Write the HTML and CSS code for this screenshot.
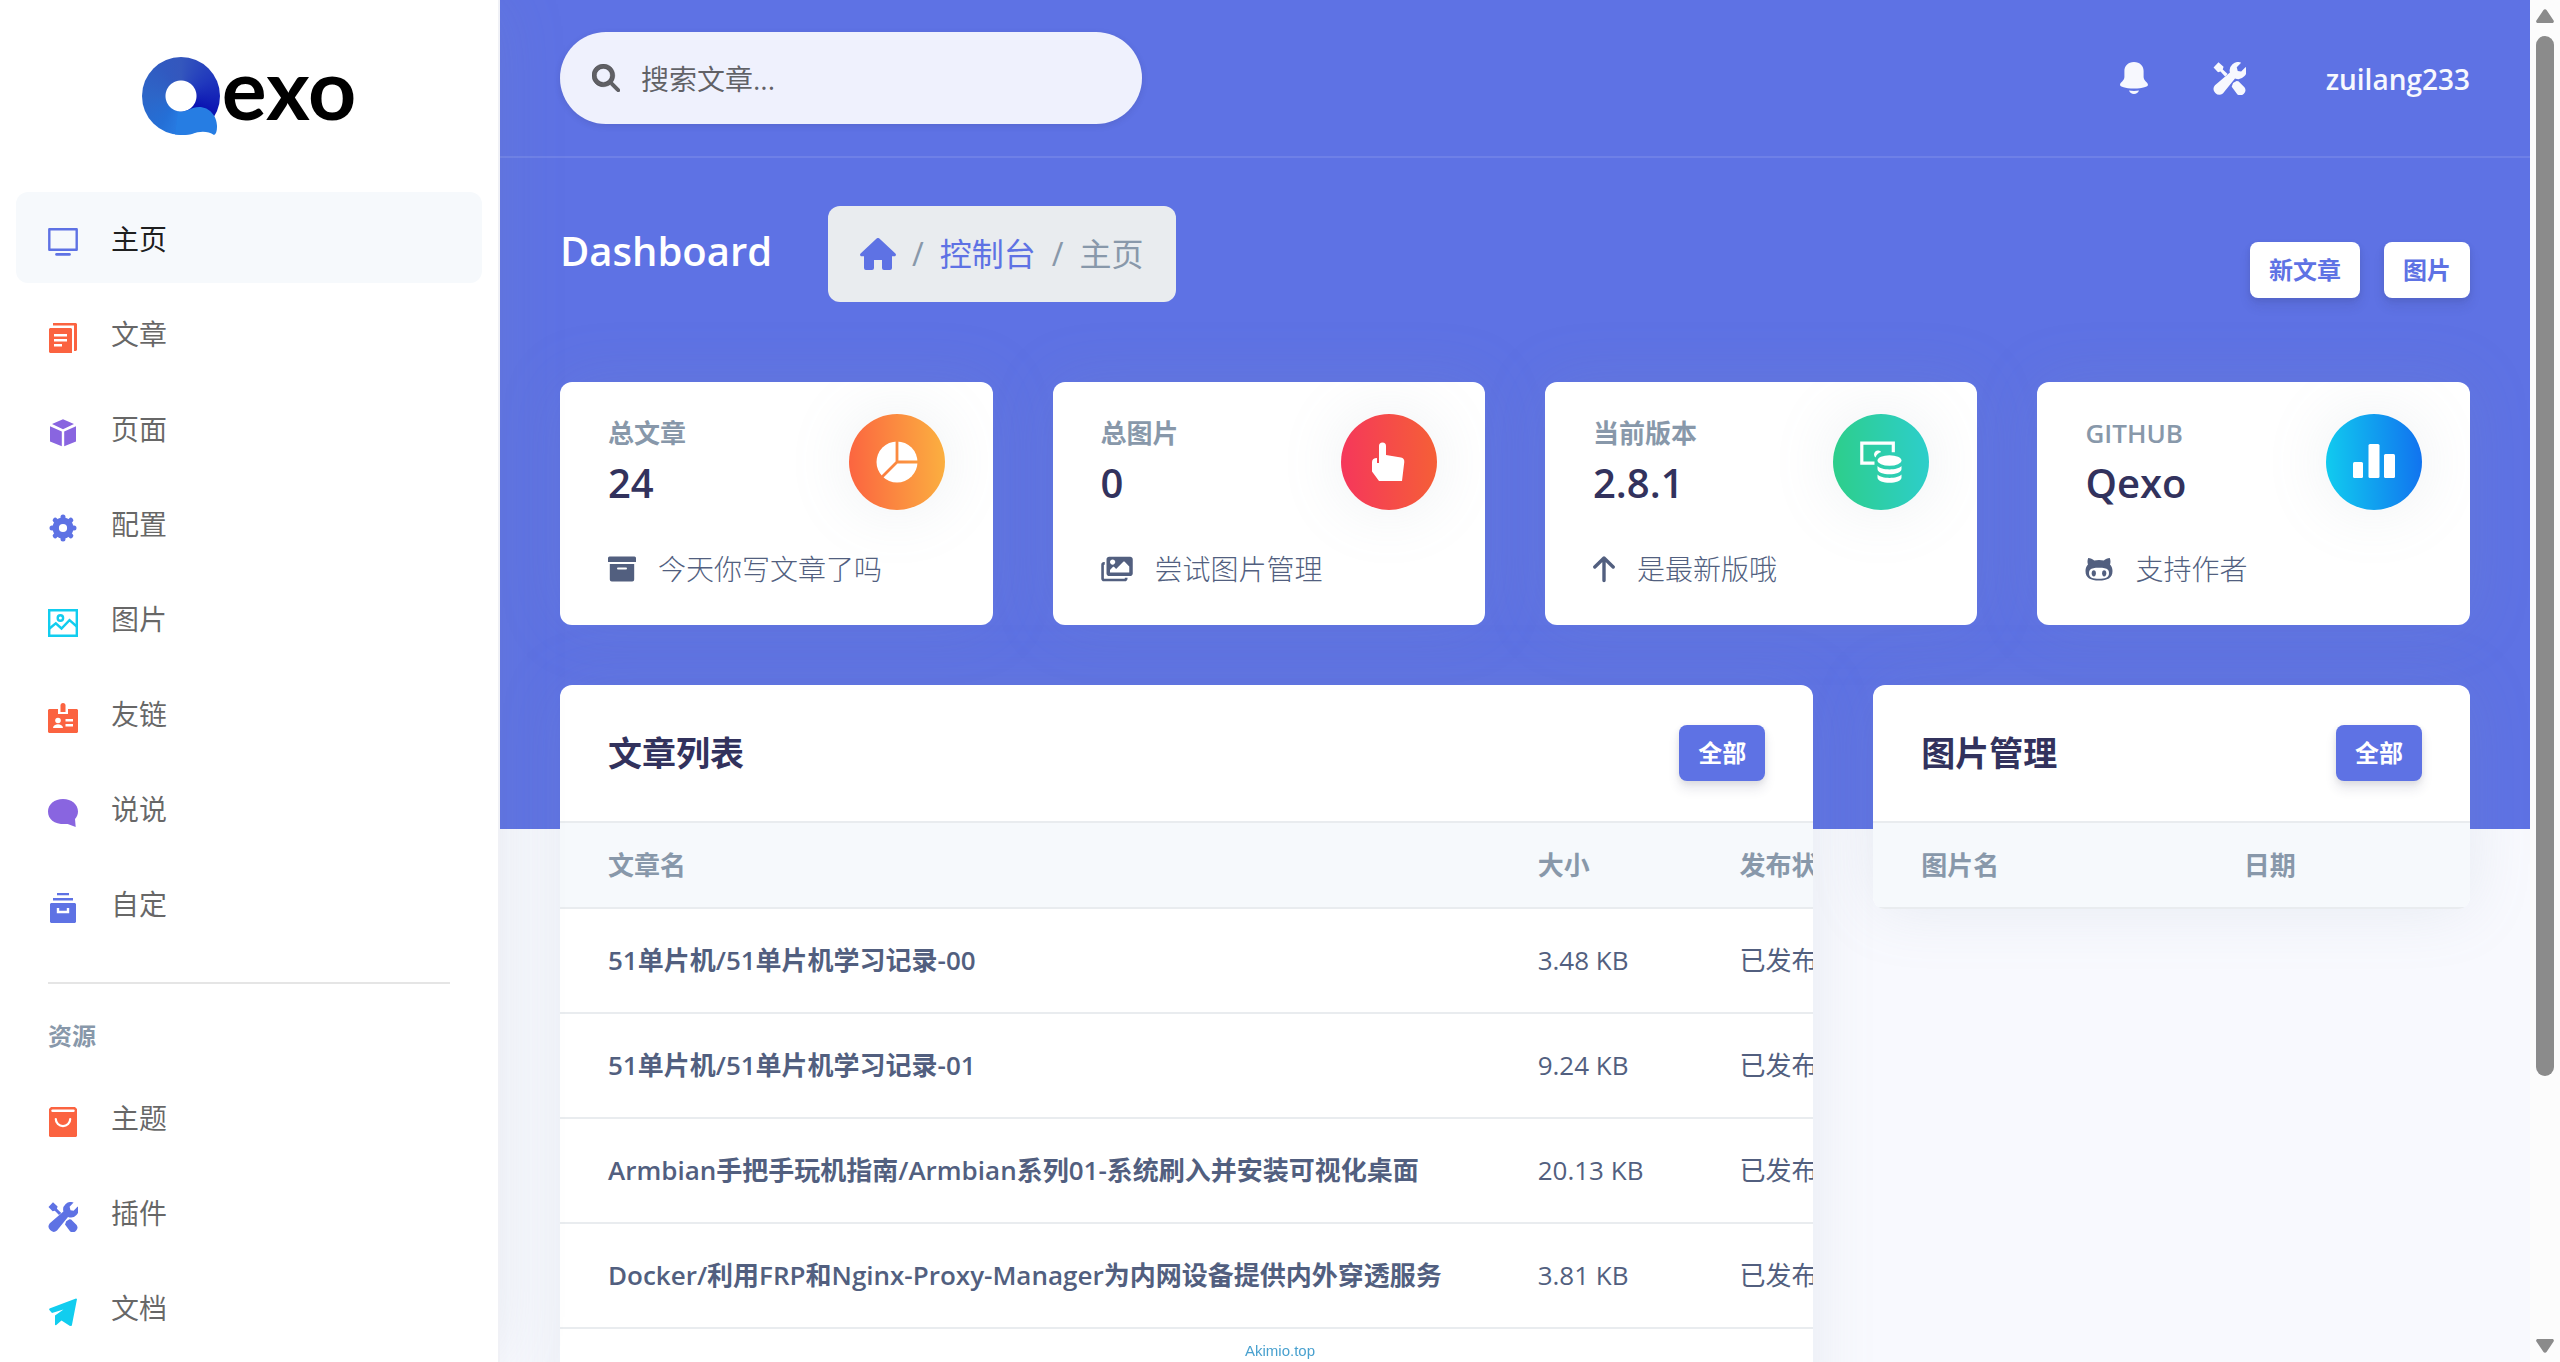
FILE: index.html
```html
<!DOCTYPE html>
<html lang="zh-CN">
<head>
<meta charset="utf-8">
<meta name="viewport" content="width=device-width, initial-scale=1">
<title>Qexo - 主页</title>
<link rel="stylesheet" href="styles.css">
</head>
<body>
<svg class="sprite" aria-hidden="true">
  <symbol id="i-tools" viewBox="0 0 30 30">
    <path d="M.5 5 5 .3 9.6 4.4 8.9 6.8l4.4 4.2-2.3 2.1-4.2-4.4-2.2.6z"/>
    <path d="M25.6.6A7.6 7.6 0 0 0 15.4 9.6L1.8 21.2a5.2 5.2 0 0 0 7.2 7.4L20 14.9a7.6 7.6 0 0 0 9.7-10.4l-4.1 4.2-3.1-.5-.9-3.4z"/>
    <path d="M17 22.6l1.2-3.4 3.2-1.9 1.7.3 5.5 5.3a4.7 4.7 0 0 1-6.4 6.6z"/>
  </symbol>
</svg>

<div class="app">
  <aside class="sidebar">
    <a class="brand" href="#" aria-label="Qexo">
      <span class="brand-mark">
        <svg viewBox="0 0 78 78"><path d="M36 54.800c9 .8 13-4.800 21-4.800 11 0 18.500 10 18 20 0 4-1 7-3 8-6-4-14-4-22-1-4 1-10 1.300-17 .6z" fill="#267de3"/></svg>
      </span>
      <span class="brand-text">exo</span>
    </a>
    <nav>
      <ul class="nav">
        <li><a class="nav-link active" href="#"><svg class="nav-icon blue" viewBox="0 0 30 30"><path d="M1.3 1.3h27.4v20.4H1.3z" fill="none" stroke="currentColor" stroke-width="2.4" stroke-linejoin="round"/><path d="M8.5 26.4h13" stroke="currentColor" stroke-width="2.6" stroke-linecap="round"/></svg>主页</a></li>
        <li><a class="nav-link" href="#"><svg class="nav-icon orange" viewBox="0 0 30 30"><path d="M5 0h23l1 1v26l-1 1h-2V2.4H5z"/><path d="M2 5h21l1 1v24H2l-1-1V6z"/><path d="M6 12.3h13M6 17.3h13M6 22.3h8" stroke="#fff" stroke-width="2.6"/></svg>文章</a></li>
        <li><a class="nav-link" href="#"><svg class="nav-icon purple" viewBox="0 0 30 30"><path d="M15 1.3 26 6 15 11.3 4 6zM2 8.3l11.8 5.3V28.2L2 23.4zM28 8.3l-11.8 5.3V28.2L28 23.4z"/></svg>页面</a></li>
        <li><a class="nav-link" href="#"><svg class="nav-icon blue" viewBox="0 0 30 30"><g fill="none" stroke="currentColor"><circle cx="15" cy="15" r="7.3" stroke-width="6.4"/><path d="M15 4v2M15 24v2M4 15h2M24 15h2M7.2 7.2l1.6 1.6M21.2 21.2l1.6 1.6M22.8 7.2l-1.6 1.6M8.8 21.2l-1.6 1.6" stroke-width="5" stroke-linecap="round"/></g></svg>配置</a></li>
        <li><a class="nav-link" href="#"><svg class="nav-icon cyan" viewBox="0 0 30 30"><g fill="none" stroke="currentColor" stroke-width="2.4"><path d="M1.2 2.2h27.6v25.6H1.2z"/><circle cx="12.4" cy="10" r="2.7"/><path d="m1.5 20.5 6.3-5.2 5.7 5.2 8-8.3 7.3 6.3"/></g></svg>图片</a></li>
        <li><a class="nav-link" href="#"><svg class="nav-icon orange" viewBox="0 0 30 30"><path d="M1 6h9v5h10V6h9l1 1v22l-1 1H1l-1-1V7z"/><path d="M12.5 9V2.5a2.5 2.5 0 0 1 5 0V9z"/><g fill="#fff"><circle cx="10" cy="17.5" r="2.8"/><path d="M5 25c.3-5 9.700-5 10 0zM17.500 16h7.500v2.400h-7.500zM17.500 21h7.500v2.400h-7.500z"/></g></svg>友链</a></li>
        <li><a class="nav-link" href="#"><svg class="nav-icon purple" viewBox="0 0 30 30"><path d="M15 1c8.500 0 15 5.500 15 12.400 0 3-1.300 5.600-3 7.600l.7 8-8-3C7 27 0 21.500 0 13.400 0 6.500 6.500 1 15 1z"/></svg>说说</a></li>
        <li><a class="nav-link" href="#"><svg class="nav-icon blue" viewBox="0 0 30 30"><path d="M9 0h12v2.300H9zM5 5h20v2.500H5zM3 10h24l1 1v18l-1 1H3l-1-1V11z"/><path d="M10 15v4h10v-4" fill="none" stroke="#fff" stroke-width="2.400"/></svg>自定</a></li>
      </ul>
      <hr class="nav-rule">
      <h6 class="nav-heading">资源</h6>
      <ul class="nav">
        <li><a class="nav-link" href="#"><svg class="nav-icon orange" viewBox="0 0 30 30"><path d="M3 0h24l2 2v27l-1 1H2l-1-1V2z"/><path d="M4.500 3.700h21" stroke="#fff" stroke-width="2.400" stroke-linecap="round"/><path d="M7.800 12a7.200 7.200 0 0 0 14.400 0" fill="none" stroke="#fff" stroke-width="2.200" stroke-linecap="round"/></svg>主题</a></li>
        <li><a class="nav-link" href="#"><svg class="nav-icon blue"><use href="#i-tools"/></svg>插件</a></li>
        <li><a class="nav-link" href="#"><svg class="nav-icon cyan" viewBox="0 0 30 30"><path d="M28 1.500 1.500 11.500l-.4 1.200L4 16l11.500-3.600L7 18.600V28l1 .2 5.500-4.600L22 29l1.800-.2L29 2z"/></svg>文档</a></li>
      </ul>
    </nav>
  </aside>

  <main class="main">
    <header class="topbar">
      <form class="search" role="search">
        <label for="q" aria-label="搜索"><svg viewBox="0 0 512 512"><path d="M416 208c0 45.900-14.900 88.300-40 122.700L502.600 457.400c12.500 12.500 12.500 32.800 0 45.300s-32.800 12.500-45.300 0L330.700 376c-34.400 25.200-76.800 40-122.700 40C93.100 416 0 322.900 0 208S93.100 0 208 0s208 93.100 208 208zM208 336a128 128 0 1 0 0-256 128 128 0 1 0 0 256z" stroke="currentColor" stroke-width="8"/></svg></label>
        <input id="q" type="text" placeholder="搜索文章...">
      </form>
      <div class="top-links">
        <a href="#" aria-label="通知"><svg class="ic-bell" viewBox="0 0 28 32"><path d="M14 0c6 0 9.600 4 9.600 9v6c0 4 4.400 5 4.400 8 0 1.500-5 3.600-14 3.600S0 24.500 0 23c0-3 4.400-4 4.400-8V9c0-5 3.600-9 9.600-9zM9 28.600c3 .5 7 .5 10 0-.8 2-2.600 3.400-5 3.400s-4.200-1.400-5-3.400z"/></svg></a>
        <a href="#" aria-label="工具"><svg class="ic-tools"><use href="#i-tools"/></svg></a>
        <a class="user" href="#">zuilang233</a>
      </div>
    </header>

    <div class="content">
      <div class="page-head">
        <h1>Dashboard</h1>
        <ol class="crumbs">
          <li><a href="#" aria-label="首页"><svg viewBox="0 0 36 32"><path d="M16.600.6a2 2 0 0 1 2.800 0L35.400 15.500c1.200 1.200.4 2.800-1 2.800H32V30a2 2 0 0 1-2 2h-6a2 2 0 0 1-2-2v-8h-8v8a2 2 0 0 1-2 2H6a2 2 0 0 1-2-2V18.300H1.600c-1.400 0-2.200-1.600-1-2.800z"/></svg></a></li>
          <li><a href="#">控制台</a></li>
          <li>主页</li>
        </ol>
        <div class="actions">
          <button class="btn btn-light" type="button">新文章</button>
          <button class="btn btn-light" type="button">图片</button>
        </div>
      </div>

      <section class="grid">
        <article class="card stat">
          <div class="stat-top">
            <div><h5>总文章</h5><strong>24</strong></div>
            <span class="badge g-orange"><svg viewBox="0 0 42 42"><mask id="pie"><path d="M0 0h42v42H0z" fill="#fff"/><path d="M21 0v21h21M21 21 5 37" stroke="#000" stroke-width="2.800" fill="none"/></mask><circle cx="21" cy="21" r="20.500" mask="url(#pie)"/></svg></span>
          </div>
          <p><svg class="f28" viewBox="0 0 28 28"><path d="M1.500 1.500h25a1.500 1.500 0 0 1 1.500 1.500v4H0V3a1.500 1.500 0 0 1 1.500-1.500zM1.800 9h24.400v15.500a2 2 0 0 1-2 2H3.800a2 2 0 0 1-2-2z"/><path d="M10 13.500h8" stroke="#fff" stroke-width="2" stroke-linecap="round"/></svg>今天你写文章了吗</p>
        </article>
        <article class="card stat">
          <div class="stat-top">
            <div><h5>总图片</h5><strong>0</strong></div>
            <span class="badge g-red"><svg viewBox="0 0 42 42"><path d="M11 5a3.500 3.500 0 0 1 7 0v9l15 2.500c2.300.5 3.500 2 3.300 4.500L34 40H11l-7-9.500V21c0-2.500 2-4 5-4v5h2z"/></svg></span>
          </div>
          <p><svg class="f32" viewBox="0 0 576 512"><path d="M480 416v16c0 26.510-21.490 48-48 48H48c-26.510 0-48-21.490-48-48V176c0-26.510 21.490-48 48-48h16v48H54a6 6 0 0 0-6 6v244a6 6 0 0 0 6 6h372a6 6 0 0 0 6-6v-10h48zm96-80V80c0-26.510-21.490-48-48-48H144c-26.510 0-48 21.490-48 48v256c0 26.510 21.490 48 48 48h384c26.510 0 48-21.490 48-48zM256 128c0 26.510-21.490 48-48 48s-48-21.490-48-48 21.490-48 48-48 48 21.490 48 48zm-96 144l55.515-55.515c4.686-4.686 12.284-4.686 16.971 0L272 256l135.515-135.515c4.686-4.686 12.284-4.686 16.971 0L512 208v112H160v-48z"/></svg>尝试图片管理</p>
        </article>
        <article class="card stat">
          <div class="stat-top">
            <div><h5>当前版本</h5><strong>2.8.1</strong></div>
            <span class="badge g-green"><svg viewBox="0 0 42 42"><path d="M14.500 22.200H1.800V2.200h31.500v9" fill="none" stroke="#fff" stroke-width="3.200"/><path d="M15.500 16.500a4 4 0 1 1 5.800-5.400c-2.800.8-4.800 2.600-5.800 5.400z"/><ellipse cx="29.500" cy="19.500" rx="12" ry="5.200"/><path d="M17.500 25c3.500 4.500 20.500 4.500 24 0v3c0 7-24 7-24 0zM17.500 33.500c3.500 4.500 20.500 4.500 24 0v3c0 7-24 7-24 0z"/></svg></span>
          </div>
          <p><svg class="f21" viewBox="0 0 22 28"><path d="M11 25.500V3.500M1.800 12 11 3l9.200 9" fill="none" stroke="currentColor" stroke-width="3.400" stroke-linecap="round" stroke-linejoin="round"/></svg>是最新版哦</p>
        </article>
        <article class="card stat">
          <div class="stat-top">
            <div><h5>GITHUB</h5><strong>Qexo</strong></div>
            <span class="badge g-blue"><svg viewBox="0 0 42 42"><rect y="21" width="10" height="16" rx="1.500"/><rect x="15.500" y="3" width="11" height="34" rx="1.500"/><rect x="31" y="13" width="11" height="24" rx="1.500"/></svg></span>
          </div>
          <p><svg class="f28" viewBox="0 0 28 28"><path d="M3.200 3c2.300.1 4.300 1 6 2.400 3-.7 6.600-.7 9.600 0C20.500 4 22.500 3.100 24.800 3c.9 2.300.9 4.500.2 6.500C26.500 11.300 27.500 13 27.500 16c0 7-5 9.500-13.500 9.500S.5 23 .5 16C.5 13 1.500 11.300 3 9.500c-.7-2-.7-4.200.2-6.500z"/><path d="M8.500 13.300c2.500-.6 8.500-.6 11 0 3 .2 4.500 2 4.500 4.700 0 4.800-4 5.800-10 5.800S4 22.800 4 18c0-2.700 1.500-4.500 4.500-4.700z" fill="#fff"/><ellipse cx="8.800" cy="18.300" rx="2.100" ry="3.100"/><ellipse cx="19.200" cy="18.300" rx="2.100" ry="3.100"/></svg>支持作者</p>
        </article>

        <article class="card posts">
          <div class="card-head"><h3>文章列表</h3><a class="btn btn-primary" href="#">全部</a></div>
          <table>
            <thead><tr><th>文章名</th><th>大小</th><th>发布状态</th></tr></thead>
            <tbody>
              <tr><th scope="row">51单片机/51单片机学习记录-00</th><td>3.48 KB</td><td>已发布</td></tr>
              <tr><th scope="row">51单片机/51单片机学习记录-01</th><td>9.24 KB</td><td>已发布</td></tr>
              <tr><th scope="row">Armbian手把手玩机指南/Armbian系列01-系统刷入并安装可视化桌面</th><td>20.13 KB</td><td>已发布</td></tr>
              <tr><th scope="row">Docker/利用FRP和Nginx-Proxy-Manager为内网设备提供内外穿透服务</th><td>3.81 KB</td><td>已发布</td></tr>
              <tr><th scope="row">&nbsp;</th><td></td><td></td></tr>
            </tbody>
          </table>
        </article>
        <article class="card images">
          <div class="card-head"><h3>图片管理</h3><a class="btn btn-primary" href="#">全部</a></div>
          <table>
            <thead><tr><th>图片名</th><th>日期</th></tr></thead>
          </table>
        </article>
      </section>
    </div>
  </main>

  <div class="scrollbar" aria-hidden="true">
    <svg viewBox="0 0 18 14"><path d="M7.300 1.200a2 2 0 0 1 3.400 0L17.600 11.500c.7 1.200 0 2.500-1.400 2.500H1.800C.4 14-.3 12.700.4 11.500z"/></svg>
    <span class="track"><span class="thumb"></span></span>
    <svg viewBox="0 0 18 14"><path d="M7.300 12.800a2 2 0 0 0 3.400 0L17.600 2.500C18.300 1.300 17.600 0 16.200 0H1.800C.4 0-.3 1.300.4 2.500z"/></svg>
  </div>
</div>

<a class="watermark" href="#">Akimio.top</a>
</body>
</html>
```
FILE: styles.css
```css
* { box-sizing: border-box; }

body {
  margin: 0;
  font-family: "Open Sans", "Noto Sans CJK SC", sans-serif;
  font-size: 26px;
  line-height: 39px;
  color: #525f7f;
  background: #f8f9fe;
}

h1, h3, h5, h6, p, ul, ol { margin: 0; padding: 0; }
ul, ol { list-style: none; }
a { color: inherit; text-decoration: none; }
svg { display: block; flex: none; fill: currentColor; }
.sprite { position: absolute; width: 0; height: 0; }

.app { display: flex; height: 100vh; overflow: hidden; }

/* sidebar */
.sidebar {
  flex: 0 0 500px;
  z-index: 2;
  overflow: hidden;
  background: #fff;
  border-right: 2px solid #f0f1f6;
  box-shadow: 0 0 64px rgba(136, 152, 170, .15);
}
.brand {
  display: flex;
  align-items: center;
  justify-content: center;
  gap: 2px;
  height: 192px;
  color: #000;
}
.brand-mark {
  width: 78px;
  height: 78px;
  border-radius: 50%;
  background:
    radial-gradient(circle at center, #fff 15px, transparent 16px),
    conic-gradient(#3457bd, #2038bd 60deg, #0a12b2 120deg, #0a12b2 140deg, #2779e0 190deg, #246fd6 215deg, #2d66c8 270deg, #3159c0 330deg, #3457bd);
}
.brand-text {
  padding-bottom: 16px;
  font-family: Lato, sans-serif;
  font-size: 84px;
  font-weight: 700;
  line-height: 84px;
}
.nav { display: grid; gap: 4px; padding: 0 16px; }
.nav-link {
  display: flex;
  align-items: center;
  gap: 33px;
  height: 91px;
  padding: 4px 32px 0;
  border-radius: 12px;
  font-size: 28px;
  font-weight: 400;
  color: rgba(0, 0, 0, .6);
}
.nav-link.active { background: #f6f9fc; color: rgba(0, 0, 0, .9); }
.nav-icon { width: 30px; height: 30px; margin-top: 6px; }
.blue { color: #5e72e4; }
.orange { color: #fb6340; }
.purple { color: #8965e0; }
.cyan { color: #11cdef; }
.nav-rule { margin: 34px 48px 32px; border: 0; border-top: 2px solid #e5e5e5; }
.nav-heading {
  padding: 0 48px;
  margin-bottom: 16px;
  font-size: 24px;
  font-weight: 600;
  line-height: 39px;
  color: #8898aa;
}

/* main column */
.main {
  flex: 1;
  min-width: 0;
  background: linear-gradient(#5e72e4, #5e72e4) top / 100% 829px no-repeat;
}
.topbar {
  display: flex;
  align-items: center;
  justify-content: space-between;
  height: 158px;
  padding: 0 60px;
  border-bottom: 2px solid #6e80e7;
}
.search {
  display: flex;
  align-items: center;
  gap: 21px;
  width: 582px;
  height: 92px;
  padding: 0 32px;
  border-radius: 46px;
  background: #eff1fd;
  box-shadow: 0 2px 6px rgba(50, 50, 93, .15);
  color: rgba(0, 0, 0, .6);
}
.search svg { width: 28px; height: 28px; }
.search input {
  flex: 1;
  min-width: 0;
  border: 0;
  padding: 2px 0 0;
  outline: 0;
  background: none;
  font: inherit;
  font-size: 28px;
  color: inherit;
}
.search input::placeholder { color: inherit; opacity: 1; }
.top-links { display: flex; align-items: center; color: #f7f8fe; }
.ic-bell { width: 28px; height: 32px; margin-right: 65px; }
.ic-tools { width: 33px; height: 33px; margin-right: 80px; }
.user { padding-top: 2px; font-size: 28px; font-weight: 600; }

.content { padding: 48px 60px; }
.page-head { display: flex; align-items: center; height: 96px; }
.page-head h1 {
  margin-right: 56px;
  padding-bottom: 6px;
  font-size: 40px;
  font-weight: 600;
  line-height: 60px;
  color: #fff;
}
.crumbs {
  display: flex;
  align-items: center;
  height: 96px;
  padding: 0 32px;
  border-radius: 12px;
  background: #e9ecef;
  font-size: 32px;
  line-height: 48px;
  color: #8898aa;
}
.crumbs li { display: flex; align-items: center; }
.crumbs li + li::before { content: "/"; padding: 0 16px; }
.crumbs a { color: #5e72e4; }
.crumbs svg { width: 36px; height: 32px; }
.actions { display: flex; gap: 24px; margin: 32px 0 0 auto; }

.btn {
  display: flex;
  align-items: center;
  height: 56px;
  padding: 0 19px;
  border: 0;
  border-radius: 8px;
  font-family: inherit;
  font-size: 24px;
  font-weight: 600;
  line-height: 36px;
  box-shadow: 0 8px 12px rgba(50, 50, 93, .11), 0 2px 6px rgba(0, 0, 0, .08);
}
.btn-light { background: #fff; color: #5e72e4; }
.btn-primary { background: #5e72e4; color: #fff; }

/* cards */
.grid {
  display: grid;
  grid-template-columns: repeat(12, 1fr);
  gap: 60px;
  align-items: start;
  margin-top: 80px;
}
.card {
  overflow: hidden;
  border-radius: 12px;
  background: #fff;
  box-shadow: 0 0 64px rgba(136, 152, 170, .15);
}
.stat { grid-column: span 3; padding: 32px 48px; height: 243px; }
.stat-top { display: flex; justify-content: space-between; }
.stat h5 { font-size: 26px; font-weight: 600; line-height: 39px; color: #8898aa; }
.stat strong { display: block; font-size: 40px; font-weight: 600; line-height: 60px; color: #32325d; }
.badge {
  display: grid;
  place-items: center;
  width: 96px;
  height: 96px;
  border-radius: 50%;
  color: #fff;
  box-shadow: 0 0 64px rgba(136, 152, 170, .15);
}
.badge svg { width: 42px; height: 42px; }
.g-orange { background: linear-gradient(87deg, #fb6340, #fbb140); }
.g-red { background: linear-gradient(87deg, #f5365c, #f56036); }
.g-green { background: linear-gradient(87deg, #2dce89, #2dcecc); }
.g-blue { background: linear-gradient(87deg, #11cdef, #1171ef); }
.stat p {
  display: flex;
  align-items: center;
  gap: 22px;
  margin-top: 35px;
  font-size: 28px;
  font-weight: 300;
  line-height: 42px;
}
.f21 { width: 22px; height: 28px; }
.f28 { width: 28px; height: 28px; }
.f32 { width: 32px; height: 28px; }

.posts { grid-column: span 8; }
.images { grid-column: span 4; }
.card-head {
  display: flex;
  align-items: center;
  justify-content: space-between;
  height: 136px;
  padding: 0 48px;
}
.card-head h3 { font-size: 34px; font-weight: 600; line-height: 51px; color: #32325d; }

table { width: 100%; border-collapse: collapse; white-space: nowrap; }
th, td { padding: 0 48px; text-align: left; border-top: 2px solid #e9ecef; }
td, tbody th { height: 105px; }
tbody th { font-weight: 600; }
thead th {
  height: 86px;
  background: #f6f9fc;
  border-bottom: 2px solid #e9ecef;
  color: #8898aa;
  font-weight: 600;
}

/* page scrollbar */
.scrollbar {
  display: flex;
  flex: 0 0 30px;
  flex-direction: column;
  gap: 13px;
  padding: 9px 6px;
  background: #fcfcfc;
  color: #8b8b8b;
}
.scrollbar svg { width: 18px; height: 14px; }
.track { flex: 1; }
.thumb { display: block; height: 80.6%; border-radius: 9px; background: #8b8b8b; }

.watermark {
  position: fixed;
  bottom: 0;
  left: 50%;
  z-index: 3;
  transform: translateX(-50%);
  font-family: "Liberation Sans", sans-serif;
  font-size: 15px;
  line-height: 22px;
  color: #49a1cf;
}
```
